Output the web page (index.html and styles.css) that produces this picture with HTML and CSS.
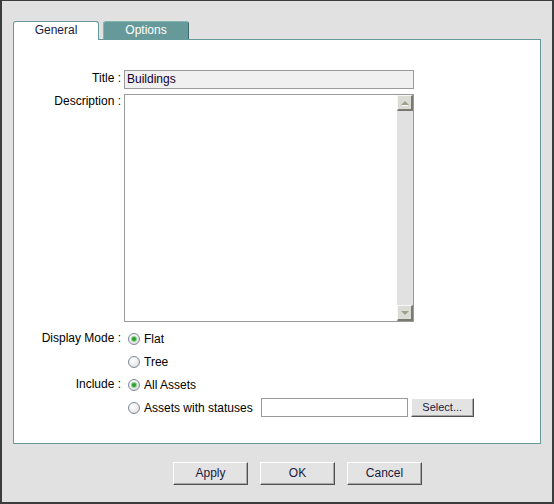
FILE: index.html
```html
<!DOCTYPE html>
<html>
<head>
<meta charset="utf-8">
<link rel="stylesheet" href="styles.css">
</head>
<body>
<div class="window">
  <div class="tabs">
    <div class="tab tab-active">General</div>
    <div class="tab tab-inactive">Options</div>
  </div>
  <div class="panel">
    <div class="form">
      <div class="label label-title">Title :</div>
      <div class="field"><div class="textbox textbox-title">Buildings</div></div>

      <div class="label label-desc">Description :</div>
      <div class="field">
        <div class="textarea">
          <div class="textarea-body"></div>
          <div class="scrollbar">
            <div class="sb-btn"><span class="arrow arrow-up"></span></div>
            <div class="sb-track"></div>
            <div class="sb-btn"><span class="arrow arrow-down"></span></div>
          </div>
        </div>
      </div>

      <div class="label label-radio">Display Mode :</div>
      <div class="field radio-row"><span class="radio radio-on"></span><span class="radio-text">Flat</span></div>

      <div class="label"></div>
      <div class="field radio-row"><span class="radio"></span><span class="radio-text">Tree</span></div>

      <div class="label label-radio">Include :</div>
      <div class="field radio-row"><span class="radio radio-on"></span><span class="radio-text">All Assets</span></div>

      <div class="label"></div>
      <div class="field radio-row"><span class="radio"></span><span class="radio-text">Assets with statuses</span><div class="textbox textbox-status"></div><div class="btn btn-select">Select...</div></div>
    </div>
  </div>
  <div class="buttons">
    <div class="btn btn-main">Apply</div>
    <div class="btn btn-main">OK</div>
    <div class="btn btn-main">Cancel</div>
  </div>
</div>
</body>
</html>
```

FILE: styles.css
```css
html, body {
  margin: 0;
  padding: 0;
  background: #e1e1e1;
}
body {
  font-family: "Liberation Sans", Arial, sans-serif;
  font-size: 12px;
  color: #000;
}
.window {
  width: 554px;
  height: 504px;
  box-sizing: border-box;
  background: #e1e1e1;
  border-top: 1px solid #3c3c3c;
  border-left: 2px solid #3c3c3c;
  border-right: 2px solid #3c3c3c;
  border-bottom: 2px solid #3c3c3c;
  padding-top: 20px;
}
.tabs {
  display: flex;
  gap: 4px;
  margin-left: 11px;
  height: 18px;
  position: relative;
  z-index: 2;
}
.tab {
  width: 86px;
  height: 18px;
  box-sizing: border-box;
  text-align: center;
  line-height: 17px;
  border-radius: 3px 3px 0 0;
}
.tab-active {
  background: #fff;
  border: 1px solid #669999;
  border-bottom: none;
  height: 19px;
  color: #1a1a40;
}
.tab-inactive {
  background: #669999;
  border-top: 1px solid #86b3b3;
  border-left: 1px solid #86b3b3;
  border-right: 1px solid #3f6d6d;
  color: #fff;
}
.panel {
  margin: 0 11px 0 11px;
  height: 405px;
  box-sizing: border-box;
  background: #fff;
  border: 1px solid #669999;
  position: relative;
  z-index: 1;
}
.form {
  display: grid;
  grid-template-columns: 107px 1fr;
  column-gap: 3px;
  padding-top: 30px;
}
.label {
  text-align: right;
  white-space: nowrap;
}
.label-title {
  padding-top: 1px;
}
.label-desc {
  margin-top: 5px;
}
.label-radio {
  align-self: center;
  margin-top: -2px;
}
.field {
  display: flex;
}
.textbox {
  box-sizing: border-box;
  border: 1px solid #9a9a9a;
  height: 19px;
  line-height: 17px;
  padding-left: 2px;
}
.textbox-title {
  width: 290px;
  background: #f0f0f0;
  color: #100030;
}
.textarea {
  margin-top: 5px;
  margin-bottom: 5px;
  width: 290px;
  height: 228px;
  box-sizing: border-box;
  border: 1px solid #9a9a9a;
  display: flex;
  background: #fff;
}
.textarea-body {
  flex: 1;
}
.scrollbar {
  width: 16px;
  display: flex;
  flex-direction: column;
  background: #e1e1e1;
}
.sb-track {
  flex: 1;
}
.sb-btn {
  height: 16px;
  box-sizing: border-box;
  background: #dcdcd6;
  border-top: 1px solid #f8f8f8;
  border-left: 1px solid #f8f8f8;
  border-right: 2px solid #7a7a72;
  border-bottom: 2px solid #7a7a72;
  display: flex;
  align-items: center;
  justify-content: center;
}
.arrow {
  width: 0;
  height: 0;
  border-left: 4px solid transparent;
  border-right: 4px solid transparent;
}
.arrow-up {
  border-bottom: 4px solid #a0a088;
  box-shadow: 0 2px 0 -1px #fff;
}
.arrow-down {
  border-top: 4px solid #a0a088;
}
.radio-row {
  height: 23px;
  align-items: center;
}
.radio {
  width: 12px;
  height: 12px;
  box-sizing: border-box;
  border-radius: 50%;
  border: 1px solid #7d8b99;
  background: radial-gradient(circle at 40% 35%, #ffffff 0%, #eeeeee 50%, #cfcfcf 100%);
  margin-left: 4px;
  position: relative;
  flex: none;
}
.radio-on::after {
  content: "";
  position: absolute;
  left: 3px;
  top: 3px;
  width: 4px;
  height: 4px;
  border-radius: 50%;
  background: #2e9e2e;
  box-shadow: 0 0 0 1px #8fd08f;
}
.radio-text {
  margin-left: 4px;
  white-space: nowrap;
}
.textbox-status {
  width: 147px;
  margin-left: 8px;
  background: #fff;
  height: 19px;
}
.btn {
  box-sizing: border-box;
  background: #e3e3e3;
  border-top: 1px solid #ffffff;
  border-left: 1px solid #ffffff;
  border-right: 1px solid #505050;
  border-bottom: 1px solid #505050;
  box-shadow: inset -1px -1px 0 #a8a8a8;
  text-align: center;
  color: #1a1a40;
}
.btn-select {
  width: 63px;
  height: 19px;
  line-height: 17px;
  margin-left: 3px;
  margin-top: -1px;
  font-size: 11px;
}
.buttons {
  display: flex;
  gap: 12px;
  padding-left: 171px;
  margin-top: 18px;
}
.btn-main {
  width: 75px;
  height: 23px;
  line-height: 21px;
}
```
